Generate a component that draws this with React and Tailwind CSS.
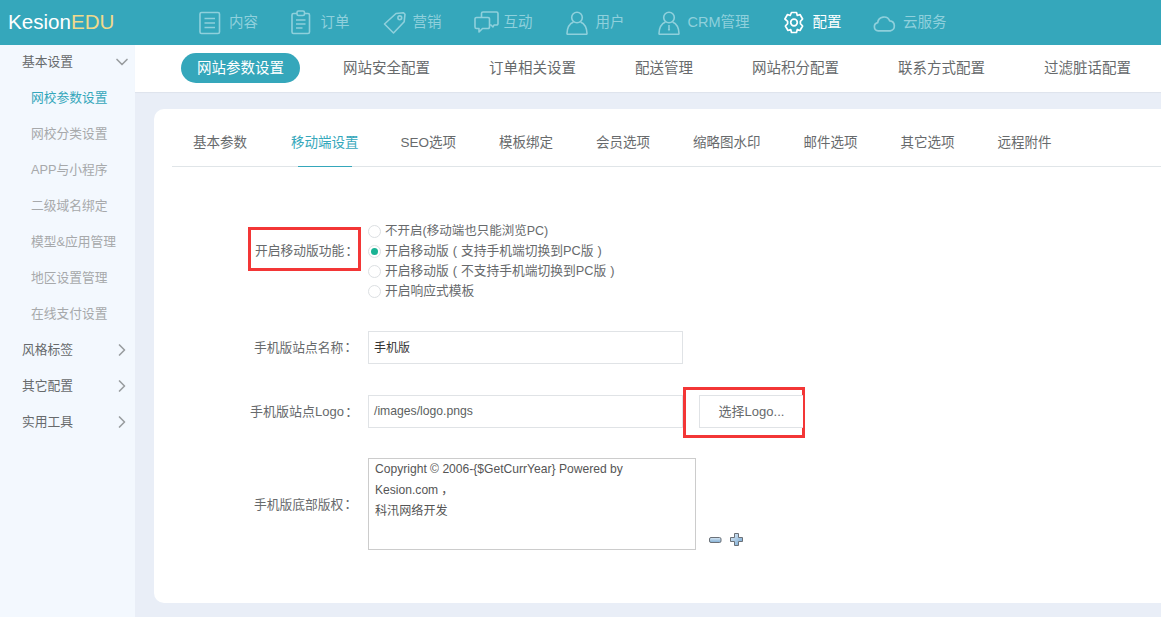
import React from 'react';
import { ChevronDown, ChevronRight } from 'lucide-react';

const FONT = "font-['Liberation_Sans','Noto_Sans_CJK_SC',sans-serif]";

const IconContent = () => (
  <svg width="22" height="24" viewBox="0 0 22 24" fill="none" stroke="currentColor" strokeWidth="1.6">
    <rect x="1" y="1.5" width="19.5" height="21" rx="1.5" />
    <path d="M5.5 7.5h10.5M5.5 12h10.5M5.5 16.5h10.5" />
  </svg>
);
const IconOrder = () => (
  <svg width="20" height="25" viewBox="0 0 20 25" fill="none" stroke="currentColor" strokeWidth="1.6">
    <path d="M6 3.5H2.5a1.5 1.5 0 0 0-1.5 1.5v17a1.5 1.5 0 0 0 1.5 1.5h14.5a1.5 1.5 0 0 0 1.5-1.5V5a1.5 1.5 0 0 0-1.5-1.5H13.5" />
    <rect x="6" y="1" width="7.5" height="4.5" rx="1.5" />
    <path d="M5 10h9.5M5 14h9.5M5 18h6.500" />
  </svg>
);
const IconTag = () => (
  <svg width="24" height="24" viewBox="0 0 24 24" fill="none" stroke="currentColor" strokeWidth="1.6">
    <path d="M13 2.500l7.500-.8 1.500 1.500-.8 7.500L10.500 22 1.500 13z" strokeLinejoin="round" />
    <circle cx="16.800" cy="6.800" r="1.900" />
  </svg>
);
const IconChat = () => (
  <svg width="25" height="23" viewBox="0 0 25 23" fill="none" stroke="currentColor" strokeWidth="1.6">
    <path d="M7.500 6V2.500a1.500 1.500 0 0 1 1.500-1.500h13.500a1.500 1.500 0 0 1 1.500 1.500v10a1.500 1.500 0 0 1-1.500 1.500H20l-1 2-2-2h-1" strokeLinejoin="round" />
    <path d="M2.500 6.500h11.500a1.500 1.500 0 0 1 1.500 1.500v8a1.500 1.500 0 0 1-1.500 1.500H8.500l-3.500 3.500v-3.500H2.500A1.500 1.500 0 0 1 1 16V8a1.500 1.500 0 0 1 1.500-1.500z" strokeLinejoin="round" />
  </svg>
);
const IconUser = () => (
  <svg width="22" height="24" viewBox="0 0 22 24" fill="none" stroke="currentColor" strokeWidth="1.6">
    <circle cx="11" cy="6.500" r="5.300" />
    <path d="M7.500 11c-3.500 1.500-6.300 5-6.500 11.500a.8.8 0 0 0 .8.800h18.400a.8.8 0 0 0 .8-.8C20.800 16 18 12.500 14.500 11" />
  </svg>
);
const IconCrm = () => (
  <svg width="22" height="24" viewBox="0 0 22 24" fill="none" stroke="currentColor" strokeWidth="1.6">
    <circle cx="11" cy="6.500" r="5.300" />
    <path d="M7.500 11c-3.500 1.500-6.300 5-6.500 11.500a.8.8 0 0 0 .8.800h18.400a.8.8 0 0 0 .8-.8C20.800 16 18 12.500 14.500 11" />
    <path d="M11 14v5" />
    <path d="M9.800 18h2.400L11 20.500z" fill="currentColor" stroke="none" />
  </svg>
);
const IconGear = () => (
  <svg width="22" height="23" viewBox="0 0 22 23" fill="none" stroke="currentColor" strokeWidth="1.7">
    <path d="M8.500 1.500h5l.8 3 2.700-1 2.600 4.500-2.200 2.300v2.400l2.200 2.300-2.600 4.500-2.700-1-.8 3h-5l-.8-3-2.700 1-2.600-4.500 2.200-2.300v-2.400L1.900 8l2.600-4.500 2.700 1z" strokeLinejoin="round" />
    <circle cx="11" cy="11.500" r="3.300" />
  </svg>
);
const IconCloud = () => (
  <svg width="23" height="18" viewBox="0 0 22 17" fill="none" stroke="currentColor" strokeWidth="1.6">
    <path d="M5 16a4 4 0 0 1-.5-7.900A6 6 0 0 1 16 6.500 4.800 4.800 0 0 1 16.500 16z" strokeLinejoin="round" />
  </svg>
);

const topNav = [
  { label: '内容', icon: <IconContent />, width: 'w-[91.5px]' },
  { label: '订单', icon: <IconOrder />, width: 'w-[92px]' },
  { label: '营销', icon: <IconTag />, width: 'w-[91px]' },
  { label: '互动', icon: <IconChat />, width: 'w-[92px]' },
  { label: '用户', icon: <IconUser />, width: 'w-[92px]' },
  { label: 'CRM管理', icon: <IconCrm />, width: 'w-[125px]' },
  { label: '配置', icon: <IconGear />, width: 'w-[90.5px]', active: true },
  { label: '云服务', icon: <IconCloud />, width: 'w-[90px]' },
];

const sideLinks = ['网校参数设置', '网校分类设置', 'APP与小程序', '二级域名绑定', '模型&应用管理', '地区设置管理', '在线支付设置'];
const subTabs = ['网站参数设置', '网站安全配置', '订单相关设置', '配送管理', '网站积分配置', '联系方式配置', '过滤脏话配置'];
const cardTabs = ['基本参数', '移动端设置', 'SEO选项', '模板绑定', '会员选项', '缩略图水印', '邮件选项', '其它选项', '远程附件'];

// centered full-width punctuation, as in the reference
const Colon = () => <span className="font-['Noto_Sans_CJK_TC'] -ml-[2px]">：</span>;
const OpenParen = () => <span className="mx-[4px]">(</span>;
const CloseParen = () => <span className="mx-[4px]">)</span>;

function Radio({ checked, className = '', children }) {
  return (
    <label className="flex items-center h-5 whitespace-nowrap">
      <span className="shrink-0 w-[13px] h-[13px] rounded-full border border-[#dcdfe2] bg-white flex items-center justify-center">
        {checked && <span className="w-[7px] h-[7px] rounded-full bg-[#1ab394]" />}
      </span>
      <span className={`ml-[4px] text-[#676a6c] ${className}`}>{children}</span>
    </label>
  );
}

function SideGroup({ title, open }) {
  return (
    <div className="h-[36px] pl-[22px] pr-[3px] flex items-center justify-between text-[#676a6c]">
      {title}
      {open
        ? <ChevronDown size={20} strokeWidth={2} className="text-[#9a9da0]" />
        : <ChevronRight size={20} strokeWidth={2} className="text-[#9a9da0]" />}
    </div>
  );
}

export default function App() {
  return (
    <div className={`${FONT} w-[1161px] h-[617px] overflow-hidden flex flex-col bg-[#e9eef7]`}>
      <header className="h-[45px] bg-[#35a7bb] flex items-center shrink-0">
        <div className="w-[199px] pl-[8px] text-[20.6px] text-white leading-none">
          Kesion<span className="text-[#f0d98c]">EDU</span>
        </div>
        {topNav.map((item) => (
          <div key={item.label} className={`${item.width} flex items-center ${item.active ? 'text-white' : 'text-[#8fd0dc]'}`}>
            <span className="w-[30px] flex items-center">{item.icon}</span>
            <span className="text-[14.5px]">{item.label}</span>
          </div>
        ))}
      </header>

      <div className="flex flex-1 min-h-0">
        <aside className="w-[135px] bg-[#f3f8fe] shrink-0 text-[12.75px]">
          <div className="-mt-px">
            <SideGroup title="基本设置" open />
            {sideLinks.map((link, i) => (
              <div key={link} className={`h-[36px] pl-[31px] flex items-center ${i === 0 ? 'text-[#35a7bb]' : 'text-[#a7a9ab]'}`}>
                {link}
              </div>
            ))}
            <SideGroup title="风格标签" />
            <SideGroup title="其它配置" />
            <SideGroup title="实用工具" />
          </div>
        </aside>

        <main className="flex-1 min-w-0">
          <div className="h-[47px] bg-white pl-[46px] pb-px flex items-center overflow-hidden shadow-[0_1px_1px_rgba(0,0,0,0.04)]">
            {subTabs.map((tab, i) => (
              <span
                key={tab}
                className={
                  i === 0
                    ? 'shrink-0 w-[119px] h-[30px] pt-px rounded-full bg-[#35a7bb] text-white text-[14.5px] flex items-center justify-center mr-[43px]'
                    : 'shrink-0 pt-[2px] text-[14.5px] text-[#676a6c] whitespace-nowrap mr-[59px]'
                }
              >
                {tab}
              </span>
            ))}
          </div>

          <section className="mt-[17px] ml-[19px] h-[494px] bg-white rounded-l-[10px] pl-[18px]">
            <div className="h-[58px] border-b border-[#e0e5e8] flex pl-[21px]">
              {cardTabs.map((tab, i) => (
                <span
                  key={tab}
                  className={`relative h-[57px] pt-[24px] flex text-[13.5px] whitespace-nowrap ${i === 0 ? 'mr-[44px]' : i === 1 ? 'mr-[42px]' : 'mr-[43px]'} ${i === 1 ? 'text-[#35a7bb]' : 'text-[#676a6c]'}`}
                >
                  {tab}
                  {i === 1 && <span className="absolute left-[7px] right-[7px] bottom-[-1px] h-px bg-[#35a7bb]" />}
                </span>
              ))}
            </div>

            <div className="pt-[54px] pl-[76px] text-[12.75px] text-[#676a6c]">
              <div className="flex items-start h-[80px]">
                <div className="w-[113px] h-[44px] mt-[6px] pt-[3px] pl-px border-[3px] border-[#f33636] flex items-center justify-center whitespace-nowrap">
                  开启移动版功能<Colon />
                </div>
                <div className="ml-[7px] flex flex-col">
                  <Radio className="text-[12.5px]">不开启(移动端也只能浏览PC)</Radio>
                  <Radio checked>开启移动版<OpenParen />支持手机端切换到PC版<CloseParen /></Radio>
                  <Radio>开启移动版<OpenParen />不支持手机端切换到PC版<CloseParen /></Radio>
                  <Radio>开启响应式模板</Radio>
                </div>
              </div>

              <div className="flex items-center mt-[30px]">
                <div className="w-[120px] pr-[14px] text-right whitespace-nowrap">手机版站点名称<Colon /></div>
                <div className="w-[315px] h-[33px] border border-[#e0e3e6] px-[5px] flex items-center text-[#333] text-[12px]">手机版</div>
              </div>

              <div className="flex items-start mt-[23px]">
                <div className="w-[120px] h-[33px] mt-[8px] pr-[13px] flex items-center justify-end whitespace-nowrap text-[13px]">手机版站点Logo<Colon /></div>
                <div className="w-[315px] h-[33px] mt-[8px] border border-[#e0e3e6] px-[5px] flex items-center text-[#5c5f61] text-[12.2px]">/images/logo.pngs</div>
                <div className="w-[122px] h-[51px] border-[3px] border-[#f33636] pl-[13px] pt-[5px]">
                  <button className="block w-[104px] h-[33px] bg-white border border-[#e0e3e6] border-r-0 text-[13px] text-[#676a6c]">选择Logo...</button>
                </div>
              </div>

              <div className="flex mt-[20px]">
                <div className="w-[120px] pr-[14px] text-right whitespace-nowrap self-center">手机版底部版权<Colon /></div>
                <div className="w-[328px] h-[92px] border border-[#ccc] px-[6px] text-[12.1px] leading-[21px] text-[#555]">
                  <div>{'Copyright © 2006-{$GetCurrYear} Powered by'}</div>
                  <div>Kesion.com<span className="ml-[3px]">，</span></div>
                  <div>科汛网络开发</div>
                </div>
                <div className="self-end flex items-center gap-[6px] ml-[12px] mb-[3px]">
                  <svg width="15" height="14" viewBox="0 0 15 14">
                    <defs>
                      <linearGradient id="minusFill" x1="0" y1="0" x2="0" y2="1">
                        <stop offset="0" stopColor="#dbe9f5" />
                        <stop offset="1" stopColor="#7fadd3" />
                      </linearGradient>
                      <linearGradient id="plusFill" x1="0" y1="0" x2="1" y2="1">
                        <stop offset="0" stopColor="#e4eff8" />
                        <stop offset="1" stopColor="#6fa3cf" />
                      </linearGradient>
                    </defs>
                    <rect x="1.500" y="4.500" width="11.500" height="5" rx="1.500" fill="url(#minusFill)" stroke="#6b7178" />
                  </svg>
                  <svg width="15" height="15" viewBox="0 0 15 15">
                    <path d="M5.500 1.500h4v4h4v4h-4v4h-4v-4h-4v-4h4z" fill="url(#plusFill)" stroke="#6b7178" strokeLinejoin="round" />
                  </svg>
                </div>
              </div>
            </div>
          </section>
        </main>
      </div>
    </div>
  );
}
